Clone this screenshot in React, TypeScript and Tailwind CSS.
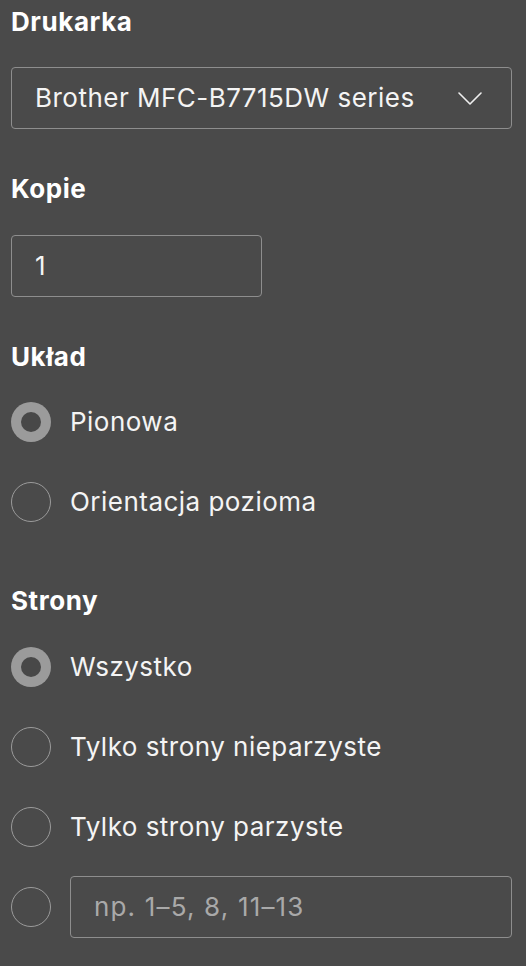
import React from "react";

function Radio({ checked }: { checked?: boolean }) {
  if (checked) {
    return (
      <div className="w-[40px] h-[40px] rounded-full bg-[#9b9b9b] flex items-center justify-center shrink-0">
        <div className="w-[20px] h-[20px] rounded-full bg-[#484848]" />
      </div>
    );
  }
  return <div className="w-[40px] h-[40px] rounded-full border-[1.5px] border-[#9b9b9b] shrink-0" />;
}

function Row({ checked, children }: { checked?: boolean; children: React.ReactNode }) {
  return (
    <div className="h-[62px] flex items-center gap-[19px]">
      <Radio checked={checked} />
      {children}
    </div>
  );
}

export default function App() {
  return (
    <div
      className="w-full min-h-[966px] bg-[#4a4a4a] pl-[11px] pr-[14px] pt-[6px] text-[#f4f4f4] tracking-[0.03em]"
      style={{ fontFamily: "Inter, 'Noto Sans', sans-serif" }}
    >
      <div className="text-[26px] leading-[32px] font-bold text-white tracking-[0.022em]">Drukarka</div>
      <div className="mt-[29px] h-[62px] rounded-[4px] border-[1.5px] border-[#8e8e8e] flex items-center justify-between pl-[23px] pr-[29px]">
        <span className="text-[26px] leading-[32px]">Brother MFC-B7715DW series</span>
        <svg width="24" height="13" viewBox="0 0 24 13" fill="none">
          <path d="M1 1L12 12L23 1" stroke="#eeeeee" strokeWidth="1.6" strokeLinecap="round" strokeLinejoin="round" />
        </svg>
      </div>

      <div className="mt-[44px] text-[26px] leading-[32px] font-bold text-white tracking-[0.022em]">Kopie</div>
      <div className="mt-[30px] h-[62px] w-[251px] rounded-[4px] border-[1.5px] border-[#8e8e8e] flex items-center pl-[23px]">
        <span className="text-[26px] leading-[32px]">1</span>
      </div>

      <div className="mt-[44px] text-[26px] leading-[32px] font-bold text-white tracking-[0.022em]">Układ</div>
      <div className="mt-[18px] flex flex-col gap-[18px]">
        <Row checked>
          <span className="text-[26px] leading-[32px]">Pionowa</span>
        </Row>
        <Row>
          <span className="text-[26px] leading-[32px]">Orientacja pozioma</span>
        </Row>
      </div>

      <div className="mt-[52px] text-[26px] leading-[32px] font-bold text-white tracking-[0.022em]">Strony</div>
      <div className="mt-[19px] flex flex-col gap-[18px]">
        <Row checked>
          <span className="text-[26px] leading-[32px]">Wszystko</span>
        </Row>
        <Row>
          <span className="text-[26px] leading-[32px]">Tylko strony nieparzyste</span>
        </Row>
        <Row>
          <span className="text-[26px] leading-[32px]">Tylko strony parzyste</span>
        </Row>
        <Row>
          <div className="flex-1 h-[62px] rounded-[4px] border-[1.5px] border-[#8e8e8e] flex items-center pl-[23px]">
            <span className="text-[26px] leading-[32px] text-[#a9a9a9] tracking-[0.045em]">np. 1–5, 8, 11–13</span>
          </div>
        </Row>
      </div>
    </div>
  );
}
